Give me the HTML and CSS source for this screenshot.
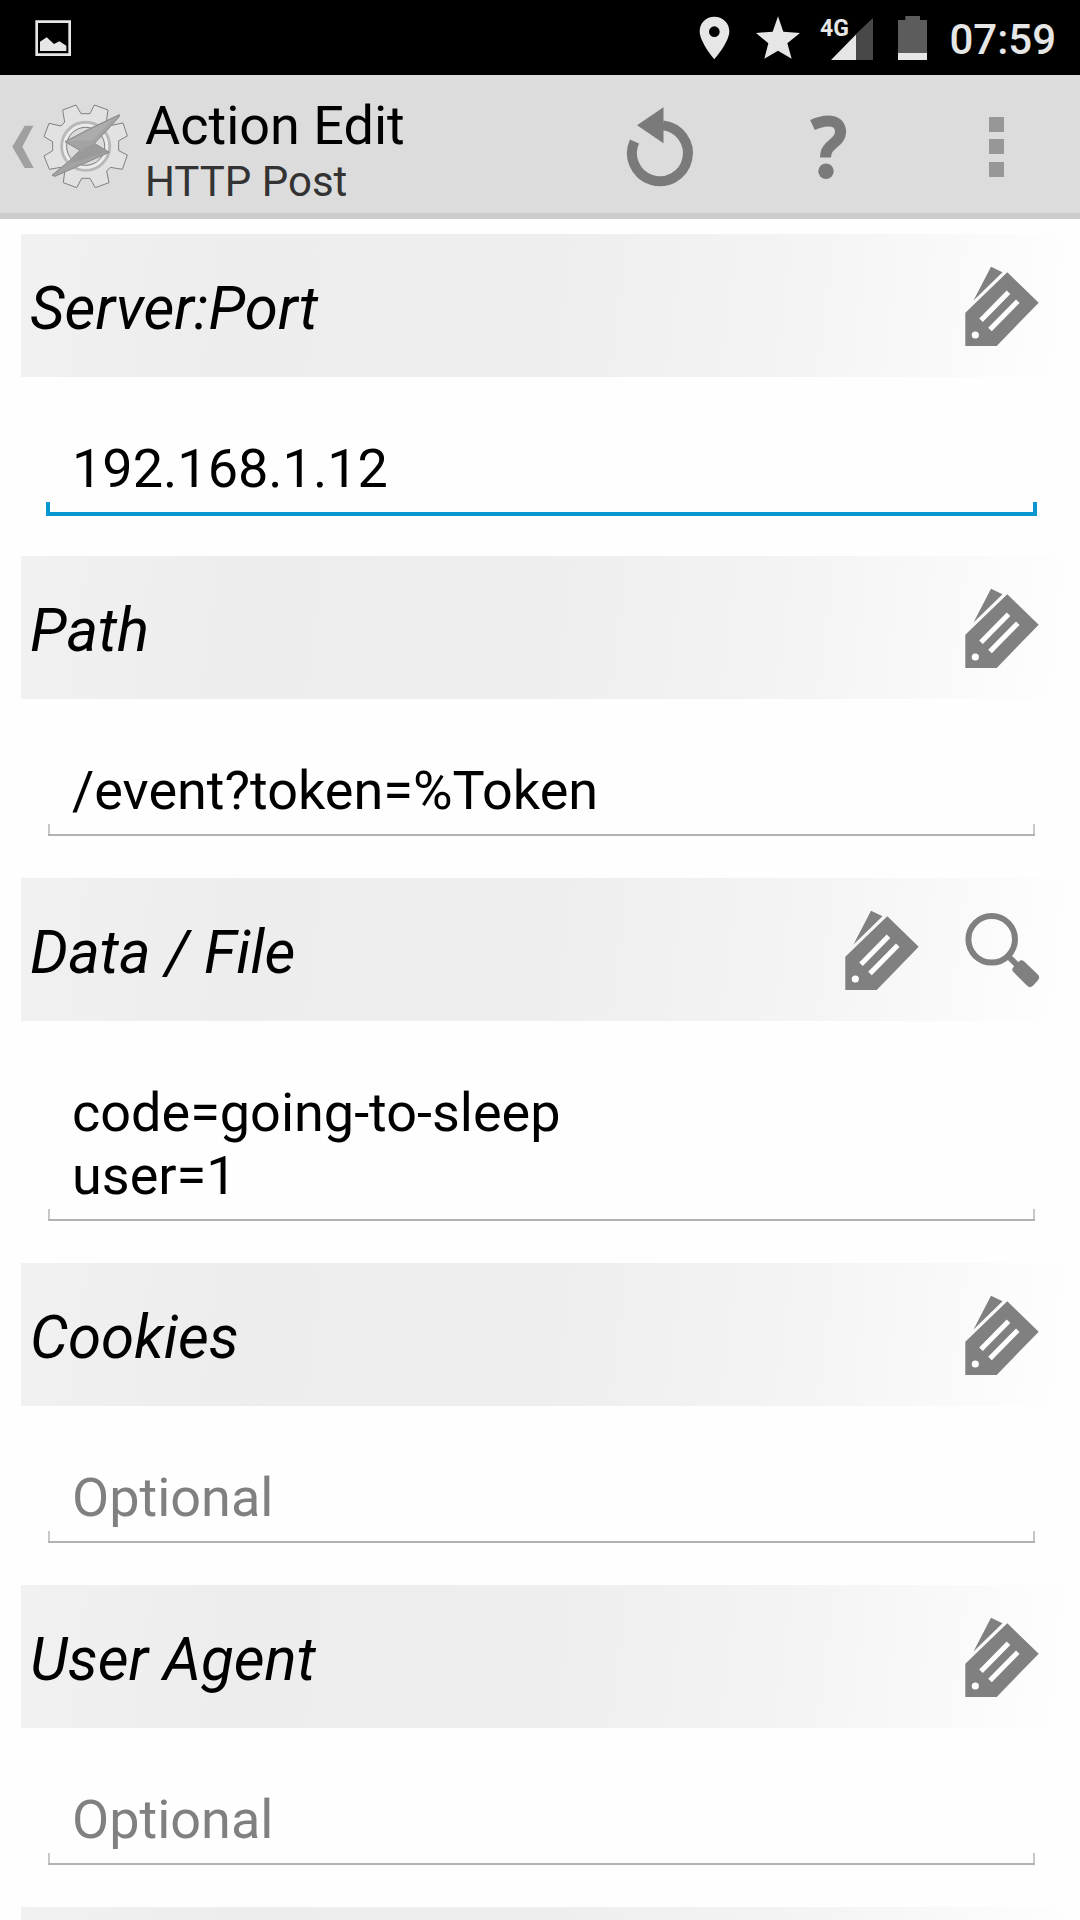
FILE: index.html
```html
<!DOCTYPE html>
<html lang="en">
<head>
<meta charset="utf-8">
<meta name="viewport" content="width=device-width">
<title>Action Edit</title>
<link rel="stylesheet" href="styles.css">
</head>
<body>
<svg class="defs" aria-hidden="true">
  <symbol id="tag" viewBox="0 0 120 143">
    <path fill="#808080" d="M23.3 78.7V112H54.7L96.7 68.7 65.3 38.3zM31.500 66.500 49 32.700 60.500 38.300z"/>
    <path stroke="#fff" stroke-width="5" fill="none" d="M39 86.300 66.500 58.200M48 95.500 75.800 67.200"/>
    <circle cx="33.300" cy="101" r="3.600" fill="#fff"/>
  </symbol>
  <symbol id="search" viewBox="0 0 120 143">
    <circle cx="49.700" cy="61.300" r="23.300" fill="none" stroke="#808080" stroke-width="6"/>
    <path stroke="#808080" stroke-width="6" d="M66 78 76 88"/>
    <path fill="#808080" stroke="#808080" stroke-width="8" stroke-linejoin="round" d="M79.500 86.500 74.500 91.500 88 105 93 99.500z"/>
  </symbol>
</svg>

<div class="status">
  <svg class="status-picture" width="36" height="36" viewBox="107 59 108 108" aria-hidden="true">
    <path fill="none" stroke="#e6e6e6" stroke-width="8" d="M112 64H211V163H112z"/>
    <path fill="#e6e6e6" d="M122 152V124L142 111 164 131 180 123 201 136V152z"/>
  </svg>
  <svg width="40" height="44" viewBox="291 46 120 132" aria-hidden="true">
    <path fill="#e6e6e6" fill-rule="evenodd" d="M346 48C321 48 302 67 302 92C302 125 346 176 346 176S391 125 391 92C391 67 371 48 346 48zM346 77A16 16 0 1 1 346 109A16 16 0 1 1 346 77z"/>
  </svg>
  <svg width="44" height="44" viewBox="471 43 132 132" aria-hidden="true">
    <path fill="#e6e6e6" d="M537 44 553 90 603 94 565 125 578 171 537 147 496 171 508 125 471 94 521 90z"/>
  </svg>
  <svg width="54" height="44" viewBox="0 0 54 44" aria-label="4G signal">
    <path fill="#484848" d="M53 2V44H36V18z"/>
    <path fill="#e6e6e6" d="M36 18.500V44H11z"/>
    <text class="network" x="0" y="20">4G</text>
  </svg>
  <svg width="35" height="44" viewBox="885 45 105 132" aria-hidden="true">
    <path fill="#5c5c5c" d="M919 45H963V57H984V156H897V57H919z"/>
    <path fill="#e6e6e6" d="M897 156H984V177H897z"/>
  </svg>
  <time class="clock">07:59</time>
</div>

<header class="bar">
  <button class="up" aria-label="Back">
    <svg width="140" height="138" viewBox="0 225 420 414">
      <path fill="#a0a0a0" d="M74 377H100L67 440 101 504H74L37 440z"/>
      <path fill="#e2e2e2" stroke="#808080" stroke-width="3" stroke-linejoin="round" fill-rule="evenodd" d="M188 330 228 315 243 341H270L283 315 324 330 319 366 330 377 369 369 382 408 356 422V452L382 465 367 508 331 502 320 513 327 548 286 563 270 535H245L230 563 190 548 194 515 182 502 148 508 132 468 158 452V425L132 410 147 370 183 378 194 366zM257 382A57 57 0 1 0 257 496A57 57 0 1 0 257 382z"/>
      <circle cx="257" cy="439" r="72" fill="none" stroke="#b8b8b8" stroke-width="9"/>
      <circle cx="257" cy="439" r="64" fill="none" stroke="#ececec" stroke-width="7"/>
      <path fill="#a3a3a3" stroke="#888" stroke-width="3" stroke-linejoin="round" d="M358 344 269 386 195 425 240 451 205 485 156 526 165 529 328 457 283 430 320 392 358 350z"/>
      <path fill="#acacac" d="M340 357 272 389 205 424 278 421z"/>
      <path fill="#9a9a9a" d="M278 432 320 455 240 482 208 489 245 450z"/>
    </svg>
  </button>
  <div class="titles">
    <h1 class="title">Action Edit</h1>
    <p class="subtitle">HTTP Post</p>
  </div>
  <button class="action" aria-label="Revert">
    <svg width="168" height="138" viewBox="0 0 168 138">
      <path fill="none" stroke="#7a7a7a" stroke-width="10" d="M87 50.400A28 28 0 1 1 58.500 66.500"/>
      <path fill="#7a7a7a" d="M61 50.300 87.500 32.300V68.300z"/>
    </svg>
  </button>
  <button class="action" aria-label="Help">
    <svg width="168" height="138" viewBox="0 0 168 138">
      <path fill="none" stroke="#7a7a7a" stroke-width="11" d="M68.500 50C76 46.500 83 45 89 46.500C96 48.500 98.500 56 95 62.500C91 69.500 81.500 71 81.500 82.500"/>
      <circle cx="82" cy="96.300" r="7.700" fill="#7a7a7a"/>
    </svg>
  </button>
  <button class="action" aria-label="More options">
    <svg width="168" height="138" viewBox="0 0 168 138">
      <path fill="#979797" d="M77 42H92V57H77zM77 64H92V79H77zM77 87H92V102H77z"/>
    </svg>
  </button>
</header>

<main class="list">
  <section>
    <div class="heading">
      <label class="name" for="server">Server:Port</label>
      <button class="tool" aria-label="Insert variable"><svg width="120" height="143"><use href="#tag"/></svg></button>
    </div>
    <input class="field field-active" id="server" type="text" value="192.168.1.12">
  </section>
  <section>
    <div class="heading">
      <label class="name" for="path">Path</label>
      <button class="tool" aria-label="Insert variable"><svg width="120" height="143"><use href="#tag"/></svg></button>
    </div>
    <input class="field" id="path" type="text" value="/event?token=%Token">
  </section>
  <section>
    <div class="heading">
      <label class="name" for="data">Data / File</label>
      <button class="tool" aria-label="Insert variable"><svg width="120" height="143"><use href="#tag"/></svg></button>
      <button class="tool" aria-label="Find file"><svg width="120" height="143"><use href="#search"/></svg></button>
    </div>
    <textarea class="field field-lines" id="data" rows="2">code=going-to-sleep
user=1</textarea>
  </section>
  <section>
    <div class="heading">
      <label class="name" for="cookies">Cookies</label>
      <button class="tool" aria-label="Insert variable"><svg width="120" height="143"><use href="#tag"/></svg></button>
    </div>
    <input class="field" id="cookies" type="text" placeholder="Optional">
  </section>
  <section>
    <div class="heading">
      <label class="name" for="agent">User Agent</label>
      <button class="tool" aria-label="Insert variable"><svg width="120" height="143"><use href="#tag"/></svg></button>
    </div>
    <input class="field" id="agent" type="text" placeholder="Optional">
  </section>
  <section>
    <div class="heading"></div>
  </section>
</main>
</body>
</html>
```
FILE: styles.css
```css
* {
  box-sizing: border-box;
}

body {
  margin: 0;
  height: 100vh;
  display: flex;
  flex-direction: column;
  overflow: hidden;
  background: #fefefe;
  color: #000;
  font-family: Roboto, "Noto Sans", sans-serif;
}

button {
  display: block;
  flex: none;
  margin: 0;
  padding: 0;
  border: 0;
  background: none;
}

svg {
  display: block;
  flex: none;
}

.defs {
  display: none;
}

.status {
  flex: none;
  display: flex;
  align-items: center;
  gap: 20px;
  height: 75px;
  padding: 0 24px 0 35px;
  background: #000;
  color: #e6e6e6;
}

.status-picture {
  margin-right: auto;
}

.network {
  fill: #e6e6e6;
  font-size: 23px;
  font-weight: 700;
}

.clock {
  padding-top: 4px;
  font-size: 42px;
  line-height: 50px;
  font-weight: 500;
}

.bar {
  flex: none;
  display: flex;
  align-items: center;
  height: 144px;
  border-bottom: 6px solid #cbcbcb;
  background: #dcdcdc;
}

.titles {
  flex: 1;
  min-width: 0;
  padding: 12px 0 0 5px;
}

.title,
.subtitle {
  margin: 0;
  font-weight: 400;
  white-space: nowrap;
}

.title {
  font-size: 54px;
  line-height: 63px;
}

.subtitle {
  font-size: 42px;
  line-height: 49px;
  color: #333;
}

.list {
  flex: 1;
  min-height: 0;
  overflow: hidden;
  padding: 15px 18px 0 21px;
}

.heading {
  display: flex;
  align-items: center;
  height: 143px;
  padding-left: 9px;
  background: linear-gradient(97deg, #f1f1f1, #ededed 20%, #eee 50%, #f4f4f4 75%, #fafafa 90%, #fefefe);
}

.name {
  flex: 1;
  padding-top: 6px;
  font-size: 60px;
  line-height: 70px;
  font-style: italic;
}

.field {
  --line: #b2b2b2;
  --tick: #c8c8c8;
  display: block;
  width: calc(100% - 50px);
  height: 139px;
  margin: 0 0 40px 25px;
  padding: 60px 26px 16px;
  border: 0;
  outline: 0;
  resize: none;
  overflow: hidden;
  background:
    linear-gradient(var(--line), var(--line)) 50% calc(100% - 2px) / calc(100% - 4px) 2px no-repeat,
    linear-gradient(var(--tick), var(--tick)) 2px calc(100% - 2px) / 2px 12px no-repeat,
    linear-gradient(var(--tick), var(--tick)) calc(100% - 2px) calc(100% - 2px) / 2px 12px no-repeat;
  color: #000;
  font: 400 54px/63px Roboto, "Noto Sans", sans-serif;
}

.field-active {
  background:
    linear-gradient(#0a96cf, #0a96cf) 0 100% / 100% 4px no-repeat,
    linear-gradient(#0a96cf, #0a96cf) 0 100% / 4px 14px no-repeat,
    linear-gradient(#0a96cf, #0a96cf) 100% 100% / 4px 14px no-repeat;
}

.field-lines {
  height: 202px;
}

.field::placeholder {
  color: #808080;
  opacity: 1;
}
```
